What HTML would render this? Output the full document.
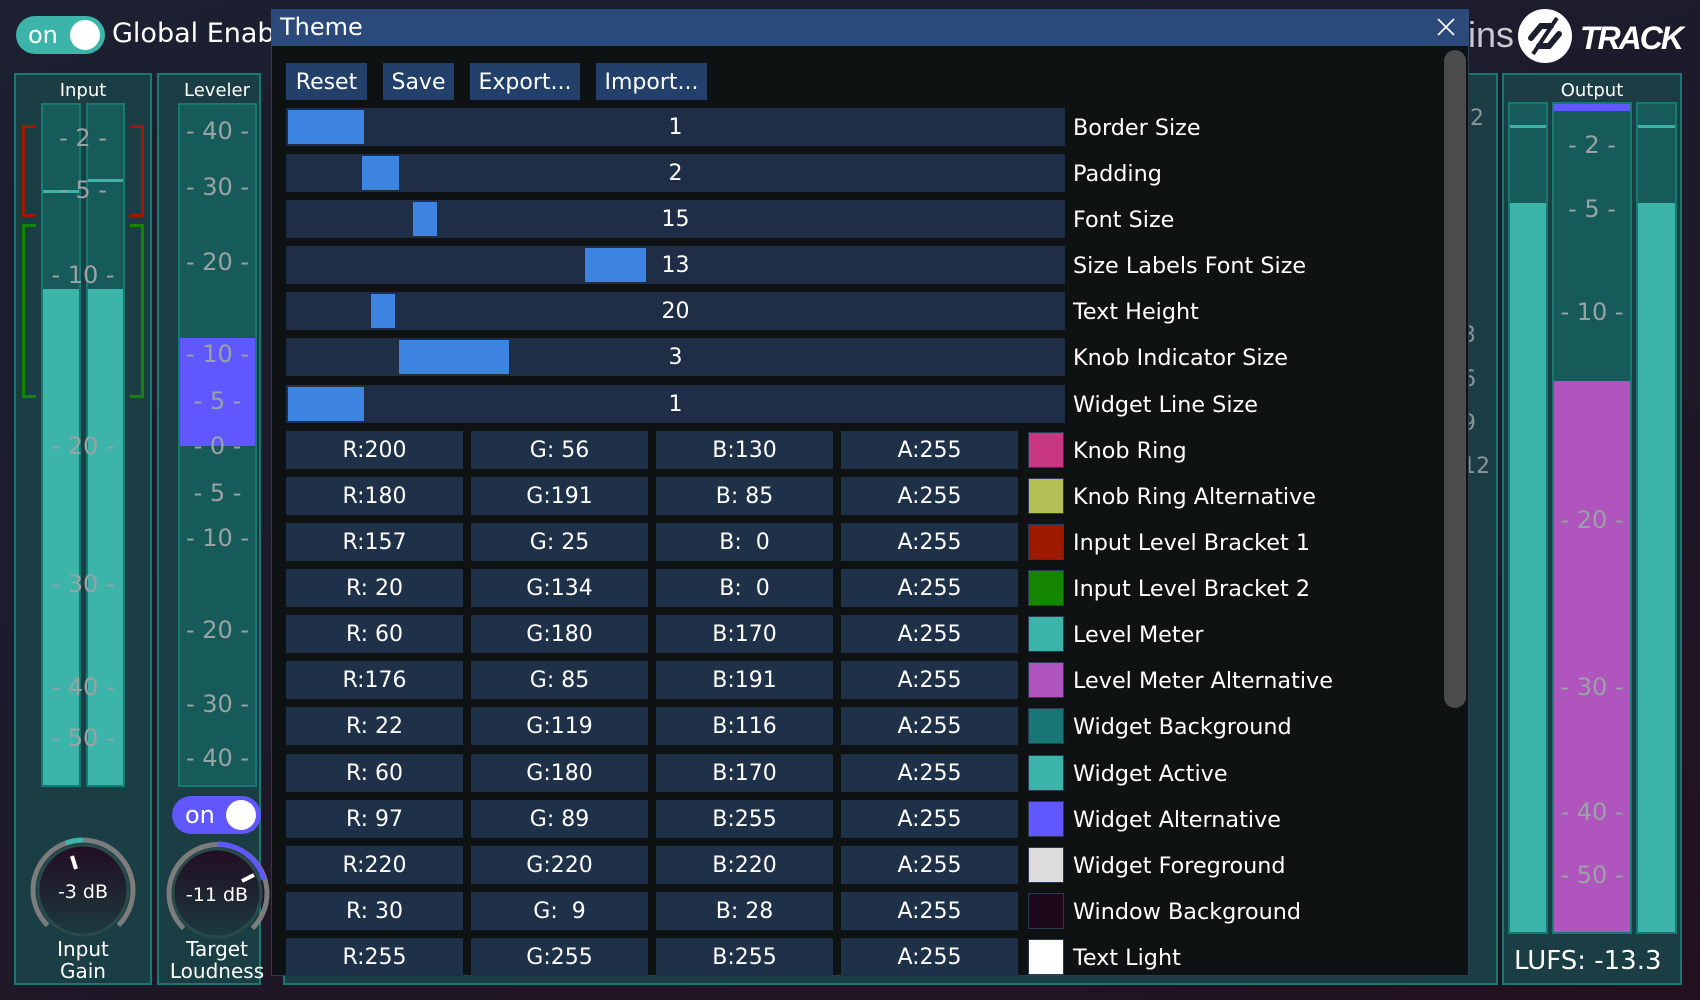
<!DOCTYPE html>
<html><head><meta charset="utf-8"><style>
*{margin:0;padding:0;box-sizing:border-box}
body{width:1700px;height:1000px;overflow:hidden;background:linear-gradient(160deg,#1c2030 0%,#1d1a2a 50%,#22101e 100%);font-family:"DejaVu Sans","Liberation Sans",sans-serif;color:#fff;position:relative}
.a{position:absolute}
.panel{position:absolute;background:#1a3e44;border:2px solid #167a72}
.meter{position:absolute;background:#175a5a;border:2px solid #167a72}
.fill{position:absolute;left:0;right:0;bottom:0;background:#3cb4aa}
.sc{position:absolute;color:#9aa3a3;font-size:24px;text-align:center;width:100%;line-height:1}
.row{position:absolute;left:286px;height:38px;font-size:22px;line-height:40px}
.trk{position:absolute;left:0;top:0;width:779px;height:38px;background:#1f2d46}
.fl{position:absolute;top:2px;height:34px;background:#3d84e0}
.val{position:absolute;left:0;width:779px;text-align:center}
.lbl{position:absolute;left:787px;white-space:nowrap;font-size:22.3px}
.bx{position:absolute;top:0;height:38px;width:177px;background:#1f3049;text-align:center}
.sw{position:absolute;left:742px;top:1px;width:36px;height:36px;border:1px solid #2a3a55}
.btn{position:absolute;top:63px;height:37px;background:#22406a;font-size:22px;line-height:39px;text-align:center}
</style></head><body>
<!-- top left toggle -->
<div class="a" style="left:16px;top:16px;width:89px;height:38px;border-radius:19px;background:#3cb4aa"></div>
<div class="a" style="left:28px;top:19px;font-size:24px;line-height:32px">on</div>
<div class="a" style="left:70px;top:20px;width:30px;height:30px;border-radius:50%;background:#fff"></div>
<div class="a" style="left:112px;top:17px;font-size:27px;line-height:34px;white-space:nowrap">Global Enable</div>
<!-- logo -->
<svg class="a" style="left:1517px;top:8px" width="56" height="56" viewBox="0 0 56 56"><circle cx="28" cy="28" r="27" fill="#fff"/><path d="M14 30 L24 18 L34 18 M42 26 L32 38 L22 38" stroke="#1c1f2e" stroke-width="6" fill="none" stroke-linecap="round"/><path d="M16 46 L40 10" stroke="#1c1f2e" stroke-width="4"/></svg>
<div class="a" style="left:1580px;top:20px;font-size:32px;font-weight:bold;font-style:italic;font-family:'Liberation Sans',sans-serif;letter-spacing:-2px">TRACK</div>

<!-- Input panel -->
<div class="panel" style="left:14px;top:73px;width:138px;height:912px"></div>
<div class="a" style="left:14px;top:80px;width:138px;text-align:center;font-size:18px">Input</div>
<div class="meter" style="left:41px;top:103px;width:40px;height:684px"><div class="fill" style="top:184px"></div><div class="a" style="left:0;right:0;top:85px;height:3px;background:#3cb4aa"></div></div>
<div class="meter" style="left:86px;top:103px;width:39px;height:684px"><div class="fill" style="top:184px"></div><div class="a" style="left:0;right:0;top:74px;height:3px;background:#3cb4aa"></div></div>
<div class="a" style="left:22px;top:125px;width:14px;height:92px;border:3px solid #9d1900;border-right:none"></div>
<div class="a" style="left:130px;top:125px;width:14px;height:92px;border:3px solid #9d1900;border-left:none"></div>
<div class="a" style="left:22px;top:224px;width:14px;height:174px;border:3px solid #148600;border-right:none"></div>
<div class="a" style="left:130px;top:224px;width:14px;height:174px;border:3px solid #148600;border-left:none"></div>
<div class="a" style="left:41px;top:0;width:84px;height:800px">
<div class="sc" style="top:126px">- 2 -</div><div class="sc" style="top:178px">- 5 -</div><div class="sc" style="top:263px">- 10 -</div><div class="sc" style="top:434px">- 20 -</div><div class="sc" style="top:572px">- 30 -</div><div class="sc" style="top:675px">- 40 -</div><div class="sc" style="top:726px">- 50 -</div></div>
<svg class="a" style="left:28px;top:836px" width="110" height="110" viewBox="0 0 110 110"><defs><linearGradient id="kg" x1="0" y1="0" x2="0" y2="1"><stop offset="0" stop-color="#220c22"/><stop offset="1" stop-color="#1c3a3e"/></linearGradient></defs><circle cx="55" cy="54" r="45" fill="url(#kg)" stroke="#2a4a4a" stroke-width="3"/><path d="M19.6 89.4 A50 50 0 1 1 90.4 89.4" stroke="#7c7c7c" stroke-width="5" fill="none"/><path d="M38 7 A50 50 0 0 1 55 4" stroke="#3cb4aa" stroke-width="5" fill="none"/><line x1="44" y1="20" x2="48" y2="33" stroke="#fff" stroke-width="4"/><text x="55" y="62" text-anchor="middle" font-size="19" fill="#fff" font-family="DejaVu Sans">-3 dB</text></svg>
<div class="a" style="left:14px;top:938px;width:138px;text-align:center;font-size:20px;line-height:22px">Input<br>Gain</div>

<!-- Leveler panel -->
<div class="panel" style="left:157px;top:73px;width:104px;height:912px"></div>
<div class="a" style="left:167px;top:80px;width:100px;text-align:center;font-size:18px">Leveler</div>
<div class="meter" style="left:178px;top:103px;width:79px;height:684px"><div class="a" style="left:0;right:0;top:233px;height:108px;background:#6157ff"></div></div>
<div class="a" style="left:178px;top:0;width:79px;height:800px">
<div class="sc" style="top:119px">- 40 -</div><div class="sc" style="top:175px">- 30 -</div><div class="sc" style="top:250px">- 20 -</div><div class="sc" style="top:342px">- 10 -</div><div class="sc" style="top:389px">- 5 -</div><div class="sc" style="top:434px">- 0 -</div><div class="sc" style="top:481px">- 5 -</div><div class="sc" style="top:526px">- 10 -</div><div class="sc" style="top:618px">- 20 -</div><div class="sc" style="top:692px">- 30 -</div><div class="sc" style="top:746px">- 40 -</div></div>
<div class="a" style="left:172px;top:796px;width:89px;height:38px;border-radius:19px;background:#6157ff"></div>
<div class="a" style="left:185px;top:799px;font-size:24px;line-height:32px">on</div>
<div class="a" style="left:226px;top:800px;width:30px;height:30px;border-radius:50%;background:#fff"></div>
<svg class="a" style="left:164px;top:840px" width="110" height="110" viewBox="0 0 110 110"><circle cx="53" cy="53" r="44" fill="url(#kg)" stroke="#2a4a4a" stroke-width="3"/><path d="M19.6 88.4 A49 49 0 1 1 88.4 88.4" stroke="#7c7c7c" stroke-width="5" fill="none"/><path d="M53 4 A49 49 0 0 1 100 40" stroke="#6157ff" stroke-width="5" fill="none"/><line x1="90" y1="35" x2="78" y2="41" stroke="#fff" stroke-width="4"/><text x="53" y="61" text-anchor="middle" font-size="19" fill="#fff" font-family="DejaVu Sans">-11 dB</text></svg>
<div class="a" style="left:167px;top:938px;width:100px;text-align:center;font-size:20px;line-height:22px;white-space:nowrap">Target<br>Loudness</div>

<!-- bottom strip behind dialog -->
<div class="a" style="left:283px;top:974px;width:1214px;height:11px;border:2px solid #167a72;border-top:none;background:#1a3e44"></div>
<!-- right behind panel -->
<div class="panel" style="left:1462px;top:73px;width:36px;height:912px;border-left:none"></div>
<div class="a" style="left:1470px;top:106px;font-size:22px;color:#8a9595">2</div>
<div class="a" style="left:1462px;top:323px;font-size:22px;color:#8a9595">3</div>
<div class="a" style="left:1462px;top:367px;font-size:22px;color:#8a9595">6</div>
<div class="a" style="left:1462px;top:411px;font-size:22px;color:#8a9595">9</div>
<div class="a" style="left:1462px;top:454px;font-size:22px;color:#8a9595">12</div>

<!-- Output panel -->
<div class="panel" style="left:1502px;top:73px;width:180px;height:912px"></div>
<div class="a" style="left:1502px;top:80px;width:180px;text-align:center;font-size:18px">Output</div>
<div class="meter" style="left:1508px;top:102px;width:40px;height:832px"><div class="fill" style="top:99px"></div><div class="a" style="left:0;right:0;top:21px;height:3px;background:#3cb4aa"></div></div>
<div class="meter" style="left:1552px;top:102px;width:80px;height:832px"><div class="a" style="left:0;right:0;top:0;height:7px;background:#6157ff"></div><div class="a" style="left:0;right:0;bottom:0;top:277px;background:#b055bd"></div></div>
<div class="meter" style="left:1636px;top:102px;width:41px;height:832px"><div class="fill" style="top:99px"></div><div class="a" style="left:0;right:0;top:21px;height:3px;background:#3cb4aa"></div></div>
<div class="a" style="left:1552px;top:0;width:80px;height:1000px">
<div class="sc" style="top:133px">- 2 -</div><div class="sc" style="top:197px">- 5 -</div><div class="sc" style="top:300px">- 10 -</div><div class="sc" style="top:508px">- 20 -</div><div class="sc" style="top:675px">- 30 -</div><div class="sc" style="top:800px">- 40 -</div><div class="sc" style="top:863px">- 50 -</div></div>
<div class="a" style="left:1514px;top:946px;font-size:26px;white-space:nowrap">LUFS: -13.3</div>

<!-- Dialog -->
<div class="a" style="left:271px;top:9px;width:1198px;height:967px;background:#0f1213;border:1px solid #2b3a55"></div>
<div class="a" style="left:271px;top:9px;width:1198px;height:37px;background:#2b4a7a"></div>
<div class="a" style="left:280px;top:11px;font-size:24px;line-height:32px">Theme</div>
<svg class="a" style="left:1436px;top:17px" width="20" height="20"><path d="M2 2 L18 18 M18 2 L2 18" stroke="#fff" stroke-width="1.6"/></svg>
<div class="a" style="left:1444px;top:50px;width:22px;height:658px;border-radius:11px;background:#4c4c4c"></div>
<div class="a" style="left:1470px;top:13px;font-size:36px;line-height:44px;color:#c8c8d0;font-family:'Liberation Sans Narrow','Liberation Sans',sans-serif;width:44px;overflow:hidden;white-space:nowrap;direction:rtl">gins</div>
<div class="btn" style="left:286px;width:81px">Reset</div>
<div class="btn" style="left:383px;width:71px">Save</div>
<div class="btn" style="left:470px;width:110px">Export...</div>
<div class="btn" style="left:596px;width:111px">Import...</div>

<div class="row" style="top:108px"><div class="trk"></div><div class="fl" style="left:2px;width:76px"></div><div class="val">1</div><div class="lbl">Border Size</div></div>
<div class="row" style="top:154px"><div class="trk"></div><div class="fl" style="left:76px;width:37px"></div><div class="val">2</div><div class="lbl">Padding</div></div>
<div class="row" style="top:200px"><div class="trk"></div><div class="fl" style="left:127px;width:24px"></div><div class="val">15</div><div class="lbl">Font Size</div></div>
<div class="row" style="top:246px"><div class="trk"></div><div class="fl" style="left:299px;width:61px"></div><div class="val">13</div><div class="lbl">Size Labels Font Size</div></div>
<div class="row" style="top:292px"><div class="trk"></div><div class="fl" style="left:85px;width:24px"></div><div class="val">20</div><div class="lbl">Text Height</div></div>
<div class="row" style="top:338px"><div class="trk"></div><div class="fl" style="left:113px;width:110px"></div><div class="val">3</div><div class="lbl">Knob Indicator Size</div></div>
<div class="row" style="top:385px"><div class="trk"></div><div class="fl" style="left:2px;width:76px"></div><div class="val">1</div><div class="lbl">Widget Line Size</div></div>

<div class="row" style="top:431px"><div class="bx" style="left:0">R:200</div><div class="bx" style="left:185px">G: 56</div><div class="bx" style="left:370px">B:130</div><div class="bx" style="left:555px">A:255</div><div class="sw" style="background:#c83882"></div><div class="lbl">Knob Ring</div></div>
<div class="row" style="top:477px"><div class="bx" style="left:0">R:180</div><div class="bx" style="left:185px">G:191</div><div class="bx" style="left:370px">B: 85</div><div class="bx" style="left:555px">A:255</div><div class="sw" style="background:#b4bf55"></div><div class="lbl">Knob Ring Alternative</div></div>
<div class="row" style="top:523px"><div class="bx" style="left:0">R:157</div><div class="bx" style="left:185px">G: 25</div><div class="bx" style="left:370px">B:&nbsp; 0</div><div class="bx" style="left:555px">A:255</div><div class="sw" style="background:#9d1900"></div><div class="lbl">Input Level Bracket 1</div></div>
<div class="row" style="top:569px"><div class="bx" style="left:0">R: 20</div><div class="bx" style="left:185px">G:134</div><div class="bx" style="left:370px">B:&nbsp; 0</div><div class="bx" style="left:555px">A:255</div><div class="sw" style="background:#148600"></div><div class="lbl">Input Level Bracket 2</div></div>
<div class="row" style="top:615px"><div class="bx" style="left:0">R: 60</div><div class="bx" style="left:185px">G:180</div><div class="bx" style="left:370px">B:170</div><div class="bx" style="left:555px">A:255</div><div class="sw" style="background:#3cb4aa"></div><div class="lbl">Level Meter</div></div>
<div class="row" style="top:661px"><div class="bx" style="left:0">R:176</div><div class="bx" style="left:185px">G: 85</div><div class="bx" style="left:370px">B:191</div><div class="bx" style="left:555px">A:255</div><div class="sw" style="background:#b055bf"></div><div class="lbl">Level Meter Alternative</div></div>
<div class="row" style="top:707px"><div class="bx" style="left:0">R: 22</div><div class="bx" style="left:185px">G:119</div><div class="bx" style="left:370px">B:116</div><div class="bx" style="left:555px">A:255</div><div class="sw" style="background:#167774"></div><div class="lbl">Widget Background</div></div>
<div class="row" style="top:754px"><div class="bx" style="left:0">R: 60</div><div class="bx" style="left:185px">G:180</div><div class="bx" style="left:370px">B:170</div><div class="bx" style="left:555px">A:255</div><div class="sw" style="background:#3cb4aa"></div><div class="lbl">Widget Active</div></div>
<div class="row" style="top:800px"><div class="bx" style="left:0">R: 97</div><div class="bx" style="left:185px">G: 89</div><div class="bx" style="left:370px">B:255</div><div class="bx" style="left:555px">A:255</div><div class="sw" style="background:#6159ff"></div><div class="lbl">Widget Alternative</div></div>
<div class="row" style="top:846px"><div class="bx" style="left:0">R:220</div><div class="bx" style="left:185px">G:220</div><div class="bx" style="left:370px">B:220</div><div class="bx" style="left:555px">A:255</div><div class="sw" style="background:#dcdcdc"></div><div class="lbl">Widget Foreground</div></div>
<div class="row" style="top:892px"><div class="bx" style="left:0">R: 30</div><div class="bx" style="left:185px">G:&nbsp; 9</div><div class="bx" style="left:370px">B: 28</div><div class="bx" style="left:555px">A:255</div><div class="sw" style="background:#1e091c"></div><div class="lbl">Window Background</div></div>
<div class="row" style="top:938px"><div class="bx" style="left:0">R:255</div><div class="bx" style="left:185px">G:255</div><div class="bx" style="left:370px">B:255</div><div class="bx" style="left:555px">A:255</div><div class="sw" style="background:#ffffff"></div><div class="lbl">Text Light</div></div>
</body></html>
